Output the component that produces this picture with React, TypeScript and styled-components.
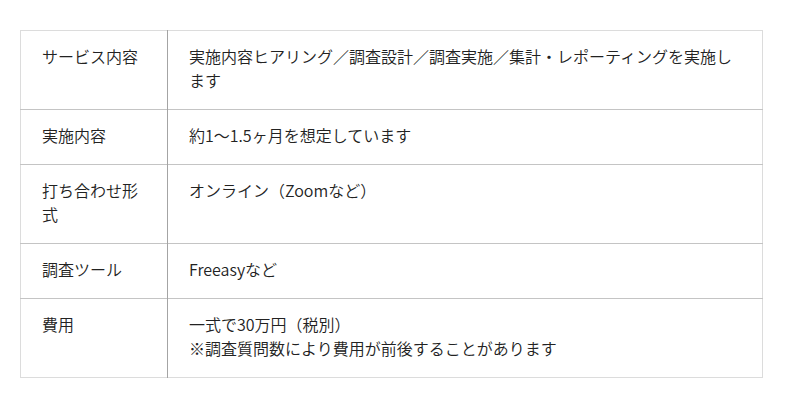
import styled, { createGlobalStyle } from 'styled-components';

const GlobalStyle = createGlobalStyle`
  body {
    margin: 0;
    background: #fff;
    font-family: "Noto Sans CJK JP", "DejaVu Sans", sans-serif;
    color: #222;
  }
`;

const Page = styled.div`
  padding: 30px 0 0 20px;
`;

const Table = styled.table`
  width: 743px;
  border-collapse: collapse;
  border: 1px solid #dcdcdc;
  font-size: 16px;
  line-height: 24px;
  font-weight: 350;
`;

const Row = styled.tr`
  border-top: 1px solid #c4c4c4;

  &:first-child {
    border-top: none;
  }
`;

const Label = styled.th`
  width: 147px;
  box-sizing: border-box;
  padding: 13px 20px 17px 21px;
  text-align: left;
  vertical-align: top;
  font-weight: inherit;
  border-right: 1px solid #a4a4a4;
`;

const Value = styled.td`
  padding: 13px 28px 17px 21px;
  vertical-align: top;
`;

const rows: { label: string; value: string[] }[] = [
  {
    label: 'サービス内容',
    value: ['実施内容ヒアリング／調査設計／調査実施／集計・レポーティングを実施します'],
  },
  { label: '実施内容', value: ['約1〜1.5ヶ月を想定しています'] },
  { label: '打ち合わせ形式', value: ['オンライン（Zoomなど）'] },
  { label: '調査ツール', value: ['Freeasyなど'] },
  {
    label: '費用',
    value: ['一式で30万円（税別）', '※調査質問数により費用が前後することがあります'],
  },
];

export default function App() {
  return (
    <Page>
      <GlobalStyle />
      <Table>
        <tbody>
          {rows.map((r) => (
            <Row key={r.label}>
              <Label>{r.label}</Label>
              <Value>
                {r.value.map((line, i) => (
                  <div key={i}>{line}</div>
                ))}
              </Value>
            </Row>
          ))}
        </tbody>
      </Table>
    </Page>
  );
}
